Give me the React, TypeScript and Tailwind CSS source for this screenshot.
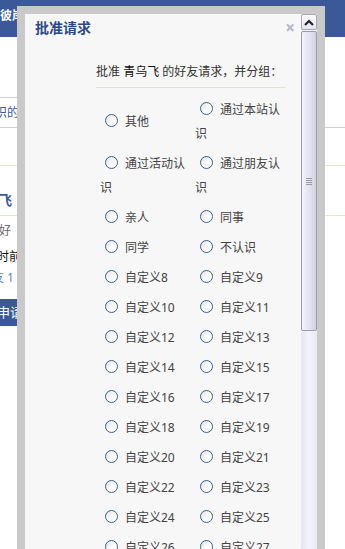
import React from "react";

const groups: string[] = [
  "其他",
  "通过本站认识",
  "通过活动认识",
  "通过朋友认识",
  "亲人",
  "同事",
  "同学",
  "不认识",
  ...Array.from({ length: 22 }, (_, i) => `自定义${i + 8}`),
];

const Radio: React.FC = () => (
  <span className="relative top-[-2px] ml-[5px] mr-[7px] inline-block h-[13px] w-[13px] rounded-full border border-[#3f5f86] bg-gradient-to-br from-[#d9dde3] via-[#fbfbfb] to-white align-middle" />
);

// ---------- background page (covered by the dialog) ----------
const BackgroundPage: React.FC = () => (
  <div className="text-[12px] leading-[18px]">
    <div className="h-[37px] bg-[#3b5998] pt-[7px] text-[12px] font-bold text-white">
      彼岸花开
    </div>
    <div className="mt-[60px] h-[31px] border-b border-[#cfcfcf]">
      <div className="h-[30px] w-[200px] overflow-hidden whitespace-nowrap border-t border-[#cfcfcf] pt-[6px] text-[#3b5998]">
        <span className="ml-[-17px]">认识的人</span>
      </div>
    </div>
    <div className="mt-[37px] h-[50px] overflow-hidden whitespace-nowrap border-t border-[#ebe4cc] pt-[25px] text-[14px] font-bold text-[#3b5998]">
      <span className="ml-[-2px]">飞</span>
    </div>
    <div className="border-t border-[#ebe4cc] pt-[6px]">
      <div className="whitespace-nowrap text-[#666]">
        <span className="ml-[-1px]">好</span>
      </div>
      <div className="mt-[8px] whitespace-nowrap text-[#111]">
        <span className="ml-[-3px]">时前</span>
      </div>
      <div className="mt-[3px] whitespace-nowrap text-[#5b86c0]">
        <span className="ml-[-8px]">友 1</span>
      </div>
      <div className="mt-[12px] h-[27px] w-[120px] overflow-hidden whitespace-nowrap bg-[#3b5998] pt-[4px] text-[13px] text-white">
        <span className="ml-[-3px]">申请加为好友</span>
      </div>
    </div>
  </div>
);

// ---------- fake classic scrollbar ----------
const ScrollBar: React.FC = () => (
  <div className="flex w-[16px] shrink-0 flex-col bg-gradient-to-r from-[#e6e6f2] via-[#f3f3fa] to-[#e9e9f4]">
    <div className="flex h-[16px] items-center justify-center rounded-[2px] border border-[#a8a8b0] bg-gradient-to-b from-[#fbfbfd] to-[#e6e6ee]">
      <svg width="10" height="7" viewBox="0 0 10 7">
        <path d="M1 6 L5 2 L9 6" fill="none" stroke="#22222e" strokeWidth="2.2" />
      </svg>
    </div>
    <div className="mt-[1px] flex h-[300px] items-center justify-center rounded-[2px] border border-[#9c9ca8] bg-gradient-to-r from-[#f4f4fa] via-[#e4e4f0] to-[#d2d2e2]">
      <div className="flex flex-col gap-[1px]">
        <span className="block h-px w-[6px] bg-[#9a9aaa]" />
        <span className="block h-px w-[6px] bg-[#9a9aaa]" />
        <span className="block h-px w-[6px] bg-[#9a9aaa]" />
        <span className="block h-px w-[6px] bg-[#9a9aaa]" />
      </div>
    </div>
  </div>
);

// ---------- approve request dialog ----------
const ApproveDialog: React.FC = () => (
  <div className="absolute left-[17px] top-[6px] flex h-[600px] w-[308px] bg-[#c9c9c9] px-[8px] pt-[8px]">
    <div className="w-[276px] overflow-hidden bg-[#f7f7f7] text-[12px] text-[#333]">
      <div className="flex items-center justify-between pl-[10px] pr-[6px] pt-[6px]">
        <span className="text-[14px] font-bold leading-[16px] text-[#2e4a86]">批准请求</span>
        <span className="text-[17px] font-bold leading-[16px] text-[#b0b8ca]">×</span>
      </div>
      <div className="ml-[71px] mt-[27px] w-[190px] whitespace-nowrap border-b border-[#e8e1c8] pb-[6px] leading-[18px]">
        批准 <span className="text-[#111]">青乌飞</span> 的好友请求，并分组：
      </div>
      <div className="ml-[75px] mt-[7px] grid grid-cols-[95px_95px] items-center">
        {groups.map((g) => (
          <div key={g} className="py-[3px] leading-[24px] text-[#444]">
            <Radio />
            {g}
          </div>
        ))}
      </div>
    </div>
    <ScrollBar />
  </div>
);

export default function App() {
  return (
    <div
      className="relative h-[549px] w-[345px] overflow-hidden bg-white"
      style={{ fontFamily: '"Noto Sans", "Noto Sans CJK SC", sans-serif' }}
    >
      <BackgroundPage />
      <ApproveDialog />
    </div>
  );
}
